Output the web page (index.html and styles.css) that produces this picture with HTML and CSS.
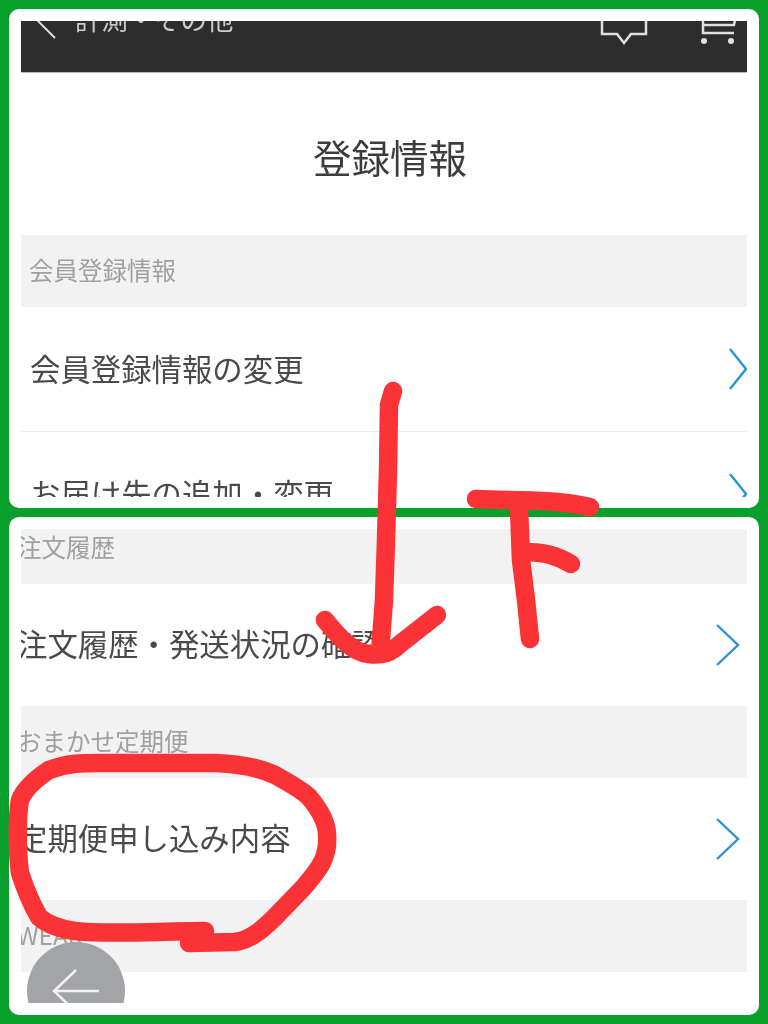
FILE: index.html
```html
<!DOCTYPE html>
<html lang="ja">
<head>
<meta charset="utf-8">
<title>登録情報</title>
<link rel="stylesheet" href="styles.css">
</head>
<body>
<main class="frame">
  <section class="card">
    <div class="view view-top">
      <header class="topbar">
        <div class="topbar-inner">
          <svg class="back-icon" viewBox="0 0 22 36"><path d="M20 1 L3 18 L20 35" /></svg>
          <span class="topbar-title">計測・その他</span>
          <svg class="chat-icon" viewBox="0 0 48 44"><path d="M2 2 H46 V32 H31 L24 41 L17 32 H2 Z" /></svg>
          <svg class="cart-icon" viewBox="0 0 40 44"><path d="M0 4 H4 L4 32 H35 M4 14 H37 L35 24 H4" /><circle cx="5" cy="40" r="3" /><circle cx="32" cy="40" r="3" /></svg>
        </div>
      </header>
      <h1 class="page-title">登録情報</h1>
      <div class="section-label">会員登録情報</div>
      <a class="row">
        <span>会員登録情報の変更</span>
        <svg class="chevron" viewBox="0 0 18 42"><path d="M1 1 L17 21 L1 41" /></svg>
      </a>
      <a class="row row-divided">
        <span>お届け先の追加・変更</span>
        <svg class="chevron" viewBox="0 0 18 42"><path d="M1 1 L17 21 L1 41" /></svg>
      </a>
    </div>
  </section>
  <section class="card">
    <div class="view view-bottom">
      <div class="scrolled">
        <div class="section-label section-first">注文履歴</div>
        <a class="row row-short">
          <span>注文履歴・発送状況の確認</span>
          <svg class="chevron" viewBox="0 0 24 42"><path d="M1 1 L22 21 L1 41" /></svg>
        </a>
        <div class="section-label">おまかせ定期便</div>
        <a class="row row-short">
          <span>定期便申し込み内容</span>
          <svg class="chevron" viewBox="0 0 24 42"><path d="M1 1 L22 21 L1 41" /></svg>
        </a>
        <div class="section-label">WEAR</div>
      </div>
      <div class="fab">
        <svg class="fab-icon" viewBox="0 0 48 46"><path d="M24 2 L2 23 L24 44 M2 23 H47" /></svg>
      </div>
    </div>
  </section>
  <svg class="scribble" viewBox="0 0 768 1024">
    <path d="M393 391 L389 405 L388 470 L386 540 L384 600 L380 652" />
    <path d="M325 620 C338 636 352 652 368 654 C384 656 392 652 400 644 L437 615" />
    <path d="M476 499 C510 501 550 498 590 507" />
    <path d="M519 508 L521 560 L526 600 L530 639" />
    <path d="M524 552 C545 552 558 556 571 564" />
    <path d="M205 931 C160 931 110 935 75 931 C60 929 48 925 39 917 C32 905 25 888 20 873 C17 850 17 815 20 800 C24 790 34 780 49 770 C70 762 85 763 110 763 L216 763 C240 764 260 768 275 775 C292 785 302 790 309 797 C320 810 327 823 327 835 C329 860 316 872 304 887 L275 917 C262 930 250 940 235 942 L189 943" />
  </svg>
</main>
</body>
</html>
```
FILE: styles.css
```css
* { box-sizing: border-box; }
html, body { margin: 0; padding: 0; }
body {
  width: 768px;
  height: 1024px;
  overflow: hidden;
  background: #08a02b;
  font-family: "Noto Sans CJK JP", "Liberation Sans", sans-serif;
}
.frame {
  position: relative;
  height: 1024px;
  padding: 9px;
  display: flex;
  flex-direction: column;
  gap: 9px;
}
.card {
  flex: 1;
  min-height: 0;
  background: #fff;
  border-radius: 10px;
  padding: 12px;
  overflow: hidden;
}
.view {
  position: relative;
  height: 100%;
  overflow: hidden;
  filter: blur(0.7px);
}
.view-top { height: 476px; }
.view-bottom { height: 474px; }
.topbar {
  height: 51px;
  background: #2d2d2d;
  box-shadow: 0 1px 1px #bbb;
  overflow: hidden;
}
.topbar-inner {
  display: flex;
  align-items: center;
  height: 24px;
  margin-top: -14px;
  padding-left: 14px;
}
.back-icon {
  width: 22px;
  height: 36px;
  flex: none;
  margin-top: 4px;
}
.back-icon path {
  fill: none;
  stroke: #ddd;
  stroke-width: 2;
}
.topbar-title {
  margin-left: 18px;
  font-size: 26.4px;
  line-height: 24px;
  color: #ccc;
  white-space: nowrap;
}
.chat-icon {
  width: 48px;
  height: 44px;
  flex: none;
  margin-left: auto;
  margin-top: 10px;
}
.chat-icon path {
  fill: none;
  stroke: #e0e0e0;
  stroke-width: 2.5;
}
.cart-icon {
  width: 40px;
  height: 44px;
  flex: none;
  margin-left: 51px;
  margin-right: 8px;
  margin-top: 8px;
}
.cart-icon path {
  fill: none;
  stroke: #e0e0e0;
  stroke-width: 2.5;
}
.cart-icon circle { fill: #e0e0e0; }
.page-title {
  margin: 0;
  height: 163px;
  line-height: 168px;
  padding-left: 12px;
  text-align: center;
  font-size: 38.5px;
  font-weight: 400;
  color: #3c3c3c;
}
.section-label {
  height: 72px;
  line-height: 70px;
  padding-left: 8px;
  background: #f2f2f2;
  font-size: 24.5px;
  color: #a0a0a0;
}
.row {
  display: flex;
  align-items: center;
  justify-content: space-between;
  height: 124px;
  padding-left: 9px;
  font-size: 30.4px;
  color: #4a4a4a;
  white-space: nowrap;
}
.row span { margin-bottom: 3px; }
.row-divided { border-top: 1px solid #ececec; height: 125px; }
.chevron {
  width: 18px;
  height: 42px;
  flex: none;
}
.chevron path {
  fill: none;
  stroke: #2a92d8;
  stroke-width: 2.4;
}
.scrolled .row, .scrolled .section-label { padding-left: 0; }
.scrolled .section-label { text-indent: -4px; }
.section-first { margin-top: -17px; }
.row-short { height: 122px; padding-right: 7px; text-indent: -4px; }
.row-short .chevron { width: 24px; }
.fab {
  position: absolute;
  left: 6px;
  top: 413px;
  width: 98px;
  height: 98px;
  border-radius: 50%;
  background: #a3a4a7;
  display: flex;
  align-items: center;
  justify-content: center;
}
.fab-icon {
  width: 48px;
  height: 46px;
}
.fab-icon path {
  fill: none;
  stroke: #f2f2f2;
  stroke-width: 2.5;
}
.scribble {
  position: absolute;
  inset: 0;
  width: 768px;
  height: 1024px;
  pointer-events: none;
}
.scribble path {
  fill: none;
  stroke: #fb3336;
  stroke-width: 18.5;
  stroke-linecap: round;
  stroke-linejoin: round;
}
```
